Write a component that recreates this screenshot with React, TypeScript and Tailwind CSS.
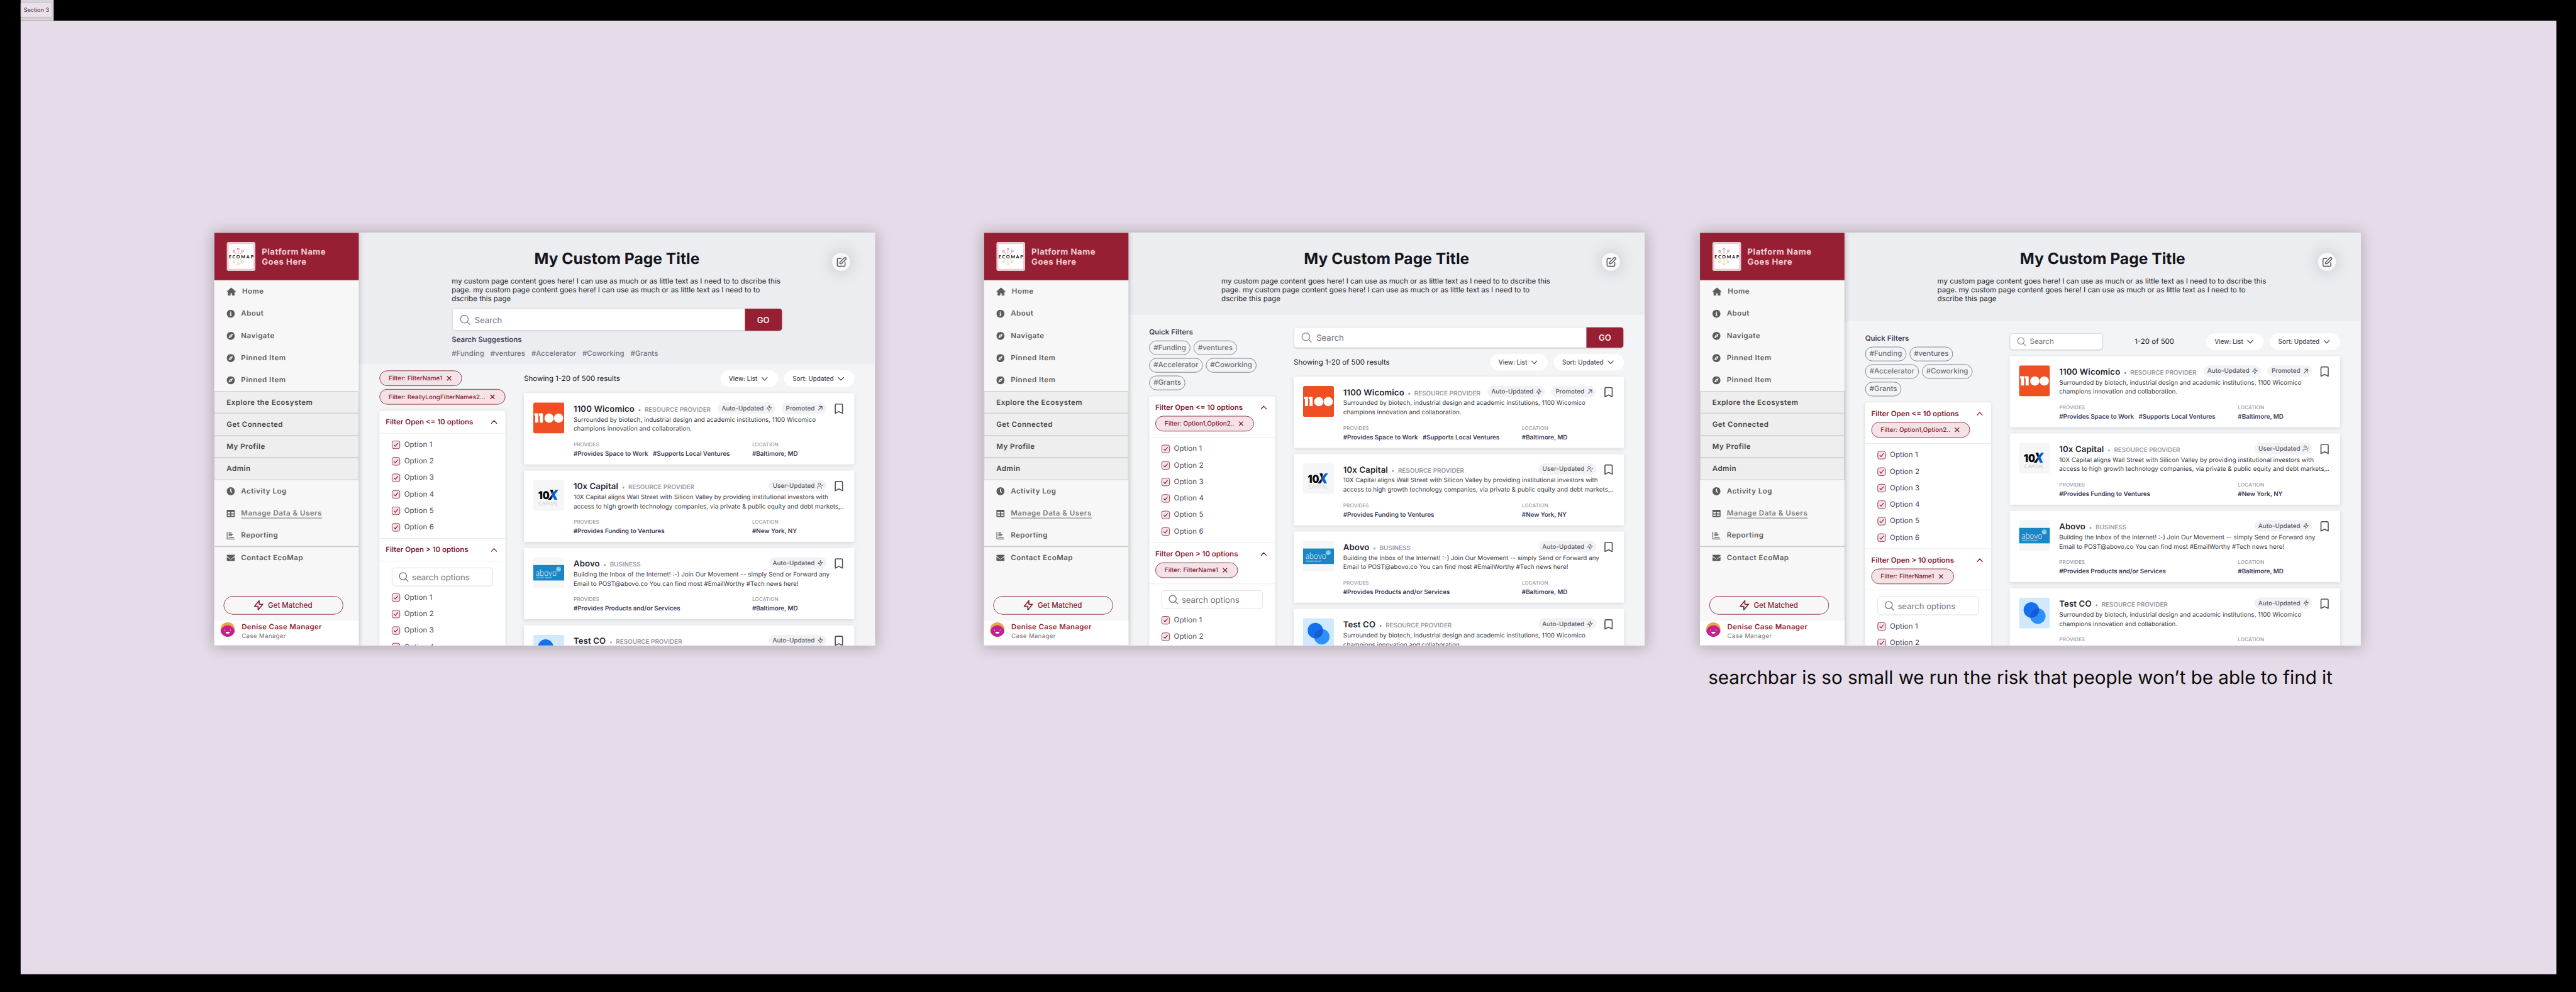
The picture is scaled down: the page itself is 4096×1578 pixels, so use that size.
import type { ReactNode } from "react";
import { FaClock, FaCompass, FaEnvelope, FaInfoCircle, FaTable } from "react-icons/fa";
import { UserCheck } from "lucide-react";

type IconProps = { className?: string };

function StrokeIcon({ d, className, width = 2 }: { d: string; className?: string; width?: number }) {
  return (
    <svg
      viewBox="0 0 24 24"
      fill="none"
      stroke="currentColor"
      strokeWidth={width}
      strokeLinecap="round"
      strokeLinejoin="round"
      className={className}
    >
      <path d={d} />
    </svg>
  );
}

const Bolt = (p: IconProps) => <StrokeIcon {...p} d="M13 10V3L4 14h7v7l9-11h-7z" />;
const Bookmark = (p: IconProps) => <StrokeIcon {...p} d="M5 5a2 2 0 012-2h10a2 2 0 012 2v16l-7-3.500L5 21V5z" />;
const Glass = (p: IconProps) => <StrokeIcon {...p} d="M21 21l-5.200-5.200M18 10.500a7.500 7.500 0 11-15 0 7.500 7.500 0 0115 0z" width={1.800} />;
const ChevronDown = (p: IconProps) => <StrokeIcon {...p} d="M18 9l-6 6.500L6 9" width={1.900} />;
const ChevronUp = (p: IconProps) => <StrokeIcon {...p} d="M6 15l6-6.500 6 6.500" width={1.900} />;
const Close = (p: IconProps) => <StrokeIcon {...p} d="M6.500 17.500l11-11M6.500 6.500l11 11" width={2.400} />;
const ArrowOut = (p: IconProps) => <StrokeIcon {...p} d="M6 18L18 6M8 6h10v10" width={2.300} />;
const Pencil = (p: IconProps) => (
  <StrokeIcon
    {...p}
    width={1.700}
    d="M11 5H6a2 2 0 00-2 2v11a2 2 0 002 2h11a2 2 0 002-2v-5m-1.414-9.414a2 2 0 112.828 2.828L11.828 15H9v-2.828l8.586-8.586z"
  />
);

const HomeIcon = () => (
  <svg viewBox="0 0 18 16" className="h-4 w-[18px]" fill="currentColor" stroke="currentColor" strokeWidth="1" strokeLinejoin="round">
    <path d="M9 .7L17.400 8h-2.300v7.500h-4.200v-4.600H7.100v4.600H2.900V8H.6z" />
  </svg>
);

const ReportIcon = () => (
  <svg viewBox="0 0 16 16" className="size-4" fill="none" stroke="currentColor" strokeWidth="1.600" strokeLinecap="round">
    <path d="M.9 1.500v12.200q0 .9.9.9h13.300M4.500 2.800h4.500M4.500 5.500h7M4.500 8.300h5.500M4.500 11.200h9" />
  </svg>
);

function EcoMapLogo() {
  return (
    <svg viewBox="0 0 56 56" className="size-14 shrink-0">
      <rect width="56" height="56" rx="4" fill="#EBCBD1" />
      <rect x="4" y="4" width="48" height="48" rx="1.500" fill="#fff" />
      <g fill="none" stroke="#B4384F" strokeWidth=".8">
        <circle cx="14" cy="18" r="1.900" />
        <circle cx="22.500" cy="14" r="1.900" />
        <circle cx="31" cy="17.500" r="1.900" />
        <path d="M15.800 20l3.700 4M22.500 17.500v5M29.500 20l-3.500 4" />
      </g>
      <g fill="none" stroke="#E3B04B" strokeWidth=".8">
        <circle cx="14" cy="38" r="1.900" />
        <circle cx="22.700" cy="42" r="1.900" />
        <circle cx="30.500" cy="38" r="1.900" />
        <path d="M15.800 36l4-4.500M22.600 38.500V33M29 36l-3.600-4.500" />
      </g>
      <text x="4.300" y="31.300" textLength="47.500" fontFamily="Lato, sans-serif" fontWeight="900" fontSize="8.600" fill="#111">
        ECOMAP
      </text>
    </svg>
  );
}

function Logo1100() {
  return (
    <svg viewBox="0 0 60 60" className="size-[60px] shrink-0">
      <rect width="60" height="60" rx="4" fill="#F04E23" />
      <g fill="#fff">
        <path d="M2 21h7.800v18H3.800V25.500H2zM11 21h7.800v18h-6V25.500H11z" />
        <circle cx="30.700" cy="30.300" r="9" />
        <circle cx="49" cy="30.300" r="9" />
      </g>
    </svg>
  );
}

function Logo10X() {
  return (
    <svg viewBox="0 0 60 60" className="size-[60px] shrink-0">
      <defs>
        <linearGradient id="tenx" x1="0" y1="0" x2="1" y2="0.300">
          <stop offset="0.500" stopColor="#050505" />
          <stop offset="0.500" stopColor="#0B5BD3" />
        </linearGradient>
      </defs>
      <rect width="60" height="60" rx="4" fill="#F5F6F8" />
      <text x="9.500" y="37.500" textLength="22" lengthAdjust="spacingAndGlyphs" fontFamily="Inter, sans-serif" fontWeight="900" fontSize="21" fill="#050505">
        10
      </text>
      <text x="29" y="39" textLength="19" lengthAdjust="spacingAndGlyphs" fontFamily="Inter, sans-serif" fontWeight="900" fontStyle="italic" fontSize="27" fill="url(#tenx)">
        X
      </text>
      <text x="10.500" y="49" textLength="38" lengthAdjust="spacingAndGlyphs" fontFamily="Lato, sans-serif" fontWeight="300" fontSize="10.500" fill="#9A9CA3">
        CAPITAL
      </text>
    </svg>
  );
}

function LogoAbovo() {
  return (
    <svg viewBox="0 0 60 60" className="size-[60px] shrink-0">
      <rect width="60" height="60" rx="4" fill="#F5F6F8" />
      <rect y="15" width="60" height="30" fill="#1B86C4" />
      <circle cx="49" cy="23" r="4.800" fill="#7CC4EC" />
      <text x="46" y="24.800" fontFamily="Lato, sans-serif" fontSize="4.500" fill="#E5F4FC">
        co
      </text>
      <text x="5" y="35.500" textLength="40" lengthAdjust="spacingAndGlyphs" fontFamily="Lato, sans-serif" fontWeight="300" fontSize="17" fill="#fff">
        abovo
      </text>
      <text x="5.500" y="41.200" textLength="30" fontFamily="Lato, sans-serif" fontSize="5.300" fill="#CBE6F5">
        social email
      </text>
    </svg>
  );
}

function LogoTest() {
  return (
    <svg viewBox="0 0 60 60" className="size-[60px] shrink-0">
      <defs>
        <clipPath id="testA">
          <circle cx="24" cy="24" r="15" />
        </clipPath>
      </defs>
      <rect width="60" height="60" rx="4" fill="#D1E9FF" />
      <circle cx="24" cy="24" r="15" fill="#1570EF" />
      <circle cx="36.500" cy="36" r="15" fill="#2E90FA" />
      <circle cx="36.500" cy="36" r="15" fill="#175CD3" clipPath="url(#testA)" />
    </svg>
  );
}

function Avatar() {
  return (
    <svg viewBox="0 0 28 28" className="size-7 shrink-0">
      <defs>
        <clipPath id="face">
          <circle cx="14" cy="14" r="14" />
        </clipPath>
      </defs>
      <g clipPath="url(#face)">
        <rect width="28" height="28" fill="#EDA54C" />
        <circle cx="14" cy="20" r="14" fill="#C4208F" />
      </g>
      <path d="M10 18.300h8a4 3.700 0 01-8 0z" fill="#fff" />
      <circle cx="8.600" cy="15" r=".8" fill="#fff" />
      <circle cx="19.400" cy="15" r=".8" fill="#fff" />
    </svg>
  );
}

function NavItem({ icon, label, muted }: { icon: ReactNode; label: string; muted?: boolean }) {
  return (
    <div className="flex h-[43px] items-center gap-3 px-6 text-sm font-semibold tracking-[0.6px] text-[#5C5C5C]">
      {icon}
      <span className={muted ? "relative top-px border-b-2 border-[#A9A9A9] leading-[17px] text-[#7B7B7B]" : ""}>
        {label}
      </span>
    </div>
  );
}

function NavSection({ label }: { label: string }) {
  return (
    <div className="flex h-[43px] items-center border border-[#C9C9C9] bg-[#EEEEEE] px-[23px] text-sm font-semibold tracking-[0.6px] text-[#464646]">
      {label}
    </div>
  );
}

function Sidebar() {
  return (
    <aside className="relative z-10 flex h-full w-[280px] shrink-0 flex-col bg-[#F7F7F7] shadow-[1px_0_10px_rgba(0,0,0,0.28)]">
      <div className="flex h-[92px] items-center gap-3 bg-[#961F33] px-6">
        <EcoMapLogo />
        <div className="text-base font-bold leading-5 tracking-[0.65px] text-[#F0CDD3]">
          Platform Name
          <br />
          Goes Here
        </div>
      </div>
      <NavItem icon={<HomeIcon />} label="Home" />
      <NavItem icon={<FaInfoCircle size={16} />} label="About" />
      <NavItem icon={<FaCompass size={16} />} label="Navigate" />
      <NavItem icon={<FaCompass size={16} />} label="Pinned Item" />
      <NavItem icon={<FaCompass size={16} />} label="Pinned Item" />
      <NavSection label="Explore the Ecosystem" />
      <NavSection label="Get Connected" />
      <NavSection label="My Profile" />
      <NavSection label="Admin" />
      <NavItem icon={<FaClock size={16} />} label="Activity Log" />
      <NavItem icon={<FaTable size={16} />} label="Manage Data & Users" muted />
      <NavItem icon={<ReportIcon />} label="Reporting" />
      <div className="-mt-px h-0.5 bg-[#C9C9C9]" />
      <div className="-mt-px">
        <NavItem icon={<FaEnvelope size={16} />} label="Contact EcoMap" />
      </div>
      <button className="ml-[18px] mt-[53px] flex h-9 w-[232px] items-center justify-center gap-1.5 rounded-full border border-[#851C32] pr-1 text-sm font-medium text-[#851C32]">
        <Bolt className="size-6" />
        Get Matched
      </button>
      <div className="mt-3 flex h-[46px] gap-[13px] bg-white pl-3 pt-[3px]">
        <Avatar />
        <div className="whitespace-nowrap">
          <div className="text-sm font-semibold leading-[18px] tracking-[0.4px] text-[#961F33]">Denise Case Manager</div>
          <div className="text-xs leading-[18px] tracking-[0.3px] text-[#777777]">Case Manager</div>
        </div>
      </div>
    </aside>
  );
}

function PageHeader({ className, children }: { className: string; children?: ReactNode }) {
  return (
    <header className={"relative flex flex-col items-center bg-[#ECEDF1] " + className}>
      <h1 className="pt-[33px] text-[30px] font-bold leading-9 text-[#15151C]">My Custom Page Title</h1>
      <p className="mt-4 w-[640px] whitespace-nowrap text-sm leading-[17px] text-[#1B1B22]">
        my custom page content goes here! I can use as much or as little text as I need to to dscribe this
        <br />
        page. my custom page content goes here! I can use as much or as little text as I need to to
        <br />
        dscribe this page
      </p>
      {children}
      <button className="absolute right-12 top-[39px] flex size-[35px] items-center justify-center rounded-full bg-[#F8F8FA] text-[#4A4A55] shadow-[0_0_30px_rgba(70,70,90,0.28)]">
        <Pencil className="size-6" />
      </button>
    </header>
  );
}

function SearchBar({ className }: { className: string }) {
  return (
    <div className={"flex w-[639px] overflow-hidden rounded-md shadow-[0_1px_2px_rgba(0,0,0,0.12)] " + className}>
      <div className="flex flex-1 items-center gap-[7px] rounded-l-md border border-r-0 border-[#D6D6DB] bg-white pl-3 text-base text-[#70707B]">
        <Glass className="size-6 text-[#9090A0]" />
        Search
      </div>
      <button className="w-[72px] bg-[#961F33] text-base font-semibold text-[#FBEDEF]">GO</button>
    </div>
  );
}

const TAGS = ["#Funding", "#ventures", "#Accelerator", "#Coworking", "#Grants"];

function Chip({ label }: { label: string }) {
  return (
    <div className="flex h-[30px] w-fit items-center gap-[5px] rounded-full border border-[#851C32] bg-[#F4E3E6] pl-[17px] pr-4 text-xs font-medium tracking-[0.03px] text-[#851C32]">
      {label}
      <Close className="size-4" />
    </div>
  );
}

function QuickFilters() {
  return (
    <div className="mb-3 pt-6">
      <div className="text-sm font-semibold leading-5 text-[#44445A]">Quick Filters</div>
      <div className="mt-1.5 flex flex-wrap gap-1.5">
        {TAGS.map((t) => (
          <span key={t} className="flex h-7 items-center rounded-full border border-[#70707F] px-[7.5px] text-sm font-medium text-[#70707B]">
            {t}
          </span>
        ))}
      </div>
    </div>
  );
}

function FilterHead({ title, chip }: { title: string; chip?: string }) {
  return (
    <div className="border-b border-[#E7E7EA] px-3 pb-[11px] pt-3">
      <div className="flex h-5 items-center justify-between text-sm font-semibold text-[#851C32]">
        {title}
        <ChevronUp className="size-5" />
      </div>
      {chip && (
        <div className="mt-1.5">
          <Chip label={chip} />
        </div>
      )}
    </div>
  );
}

function Options({ count, searchable }: { count: number; searchable?: boolean }) {
  return (
    <div className="flex flex-col gap-3 border-b border-[#E7E7EA] px-6 pb-[11px] pt-3">
      {searchable && (
        <div className="flex h-9 items-center gap-[5px] rounded-md border border-[#D9D9DE] pl-[11px] text-base text-[#73737D]">
          <Glass className="size-[22px]" />
          search options
        </div>
      )}
      {Array.from({ length: count }, (_, i) => (
        <label key={i} className="flex h-5 items-center gap-2 text-sm tracking-[0.12px] text-[#44445A]">
          <span className="flex size-4 items-center justify-center rounded border border-[#851C32] bg-[#F8E1E5] text-[#6B1428]">
            <StrokeIcon d="M5 13l4.500 5L19 6" className="size-3" width={2.600} />
          </span>
          Option {i + 1}
        </label>
      ))}
    </div>
  );
}

function FilterPanel({ chips, tail }: { chips?: boolean; tail: number }) {
  return (
    <div className="w-[244px] rounded bg-white shadow-[0_1px_6px_rgba(0,0,0,0.1)]">
      <FilterHead title="Filter Open <= 10 options" chip={chips ? "Filter: Option1,Option2.." : undefined} />
      <Options count={6} />
      <FilterHead title="Filter Open > 10 options" chip={chips ? "Filter: FilterName1" : undefined} />
      <Options count={tail} searchable />
    </div>
  );
}

function Dropdown({ label }: { label: string }) {
  return (
    <button className="flex h-8 items-center gap-1 rounded-full bg-white px-4 text-xs font-medium text-[#4A4A5A]">
      {label}
      <ChevronDown className="size-5" />
    </button>
  );
}

function Dropdowns() {
  return (
    <div className="flex gap-3">
      <Dropdown label="View: List" />
      <Dropdown label="Sort: Updated" />
    </div>
  );
}

type Badge = "auto" | "user" | "promoted";

type Listing = {
  logo: ReactNode;
  name: string;
  kind: string;
  badges: Badge[];
  lines: [string, string];
  provides: string[];
  location: string;
};

const LISTINGS: Listing[] = [
  {
    logo: <Logo1100 />,
    name: "1100 Wicomico",
    kind: "RESOURCE PROVIDER",
    badges: ["auto", "promoted"],
    lines: [
      "Surrounded by biotech, industrial design and academic institutions, 1100 Wicomico",
      "champions innovation and collaboration.",
    ],
    provides: ["#Provides Space to Work", "#Supports Local Ventures"],
    location: "#Baltimore, MD",
  },
  {
    logo: <Logo10X />,
    name: "10x Capital",
    kind: "RESOURCE PROVIDER",
    badges: ["user"],
    lines: [
      "10X Capital aligns Wall Street with Silicon Valley by providing institutional investors with",
      "access to high growth technology companies, via private & public equity and debt markets,..",
    ],
    provides: ["#Provides Funding to Ventures"],
    location: "#New York, NY",
  },
  {
    logo: <LogoAbovo />,
    name: "Abovo",
    kind: "BUSINESS",
    badges: ["auto"],
    lines: [
      "Building the Inbox of the Internet! :-) Join Our Movement -- simply Send or Forward any",
      "Email to POST@abovo.co You can find most #EmailWorthy #Tech news here!",
    ],
    provides: ["#Provides Products and/or Services"],
    location: "#Baltimore, MD",
  },
  {
    logo: <LogoTest />,
    name: "Test CO",
    kind: "RESOURCE PROVIDER",
    badges: ["auto"],
    lines: [
      "Surrounded by biotech, industrial design and academic institutions, 1100 Wicomico",
      "champions innovation and collaboration.",
    ],
    provides: [],
    location: "",
  },
];

const BADGES: Record<Badge, { label: string; icon: ReactNode }> = {
  auto: { label: "Auto-Updated", icon: <Bolt className="size-3.5" /> },
  user: { label: "User-Updated", icon: <UserCheck className="size-3.5" /> },
  promoted: { label: "Promoted", icon: <ArrowOut className="size-3.5" /> },
};

function Card({ item }: { item: Listing }) {
  return (
    <article className="flex h-[138px] w-[640px] gap-[18px] bg-white p-[18px] pb-3 shadow-[0_2px_8px_rgba(0,0,0,0.12)]">
      {item.logo}
      <div className="min-w-0 flex-1 whitespace-nowrap">
        <div className="flex h-6 items-start justify-between">
          <div className="flex items-baseline gap-2">
            <h2 className="text-base font-semibold leading-6 tracking-[0.17px] text-[#26262E]">{item.name}</h2>
            <span className="mt-[13px] size-[3.5px] self-start rounded-full bg-[#9A9AA6]" />
            <span className="text-xs font-semibold text-[#9A9AA6]">{item.kind}</span>
          </div>
          <div className="flex items-start gap-3">
            {item.badges.map((b) => (
              <span key={b} className="flex h-[22px] items-center gap-1 rounded-full bg-[#F1F2F5] pl-2 pr-[5px] text-xs font-medium text-[#5B5B66]">
                {BADGES[b].label}
                {BADGES[b].icon}
              </span>
            ))}
            <Bookmark className="size-6 text-[#4F4F60]" />
          </div>
        </div>
        <p className="text-xs leading-[18px] text-[#3A3A44]">
          {item.lines[0]}
          <br />
          {item.lines[1]}
        </p>
        <div className="mt-3.5 flex text-xs leading-[18px] text-[#40405A]">
          <div className="w-[346px]">
            <div className="text-[10px] font-medium leading-4 text-[#9A9AA6]">PROVIDES</div>
            <div className="flex gap-[9px] font-semibold tracking-[-0.06px]">
              {item.provides.map((p) => (
                <span key={p}>{p}</span>
              ))}
            </div>
          </div>
          <div>
            <div className="text-[10px] font-medium leading-4 text-[#9A9AA6]">LOCATION</div>
            <div className="font-semibold tracking-[-0.06px]">{item.location}</div>
          </div>
        </div>
      </div>
    </article>
  );
}

function Cards() {
  return (
    <div className="mt-3 flex flex-col gap-3">
      {LISTINGS.map((item) => (
        <Card key={item.name} item={item} />
      ))}
    </div>
  );
}

function Frame({ header, left, right }: { header: ReactNode; left: ReactNode; right: ReactNode }) {
  return (
    <div className="h-[800px] w-[1280px] shadow-[0_2px_26px_3px_rgba(0,0,0,0.22)]">
      <div className="flex h-full overflow-hidden bg-[#F3F4F6]">
        <Sidebar />
        <div className="flex-1">
          {header}
          <div className="flex gap-9 pl-10">
            <div className="w-[244px]">{left}</div>
            <div className="w-[640px]">{right}</div>
          </div>
        </div>
      </div>
    </div>
  );
}

function SearchOnTop() {
  return (
    <Frame
      header={
        <PageHeader className="h-[255px]">
          <SearchBar className="mt-[11px] h-[43px]" />
          <div className="mt-2 w-[640px] text-sm">
            <div className="font-semibold leading-5 text-[#44445A]">Search Suggestions</div>
            <div className="mt-1.5 flex gap-3 font-medium leading-5 text-[#777783]">
              {TAGS.map((t) => (
                <span key={t}>{t}</span>
              ))}
            </div>
          </div>
        </PageHeader>
      }
      left={
        <>
          <div className="mb-3 flex flex-col gap-1.5 pt-3">
            <Chip label="Filter: FilterName1" />
            <Chip label="Filter: ReallyLongFilterNames2..." />
          </div>
          <FilterPanel tail={4} />
        </>
      }
      right={
        <>
          <div className="flex items-center justify-between pt-3 text-sm text-[#15151C]">
            Showing 1-20 of 500 results
            <Dropdowns />
          </div>
          <Cards />
        </>
      }
    />
  );
}

function SearchAboveResults() {
  return (
    <Frame
      header={<PageHeader className="h-[159px]" />}
      left={
        <>
          <QuickFilters />
          <FilterPanel chips tail={2} />
        </>
      }
      right={
        <>
          <div className="pt-6">
            <SearchBar className="h-10" />
          </div>
          <div className="flex items-center justify-between pt-3 text-sm text-[#15151C]">
            Showing 1-20 of 500 results
            <Dropdowns />
          </div>
          <Cards />
        </>
      }
    />
  );
}

function SearchInline() {
  return (
    <Frame
      header={<PageHeader className="h-[171px]" />}
      left={
        <>
          <QuickFilters />
          <FilterPanel chips tail={2} />
        </>
      }
      right={
        <>
          <div className="flex items-center justify-between pt-6 text-sm text-[#15151C]">
            <div className="flex h-8 w-[180px] items-center gap-1.5 rounded-md border border-[#D6D6DB] bg-white pl-3 text-[#70707B] shadow-[0_1px_2px_rgba(0,0,0,0.08)]">
              <Glass className="size-5 text-[#9090A0]" />
              Search
            </div>
            1-20 of 500
            <Dropdowns />
          </div>
          <Cards />
        </>
      }
    />
  );
}

export default function App() {
  return (
    <div className="h-[1578px] w-[4096px] overflow-hidden bg-black font-[Inter,sans-serif] [text-rendering:geometricPrecision]">
      <div className="flex h-[1922px] w-[4990px] origin-top-left scale-[0.82084] flex-col pl-10">
        <div className="h-10 w-16 shrink-0 bg-[#D6D4D5] pt-1">
          <div className="flex h-[30px] w-[61px] items-center justify-center rounded-[2px] border border-[#B5B0B7] bg-[#EADFEB] text-[11px] text-[#2A2433]">
            Section 3
          </div>
        </div>
        <main className="flex h-[1848px] w-[4912px] shrink-0 bg-[#E6DBE8] pl-[375px] pt-[411px]">
          <SearchOnTop />
          <div className="ml-[211px]">
            <SearchAboveResults />
          </div>
          <div className="ml-[107px]">
            <SearchInline />
            <p className="ml-4 mt-10 whitespace-nowrap text-[36px] leading-[44px] text-[#0A0A0A]">
              searchbar is so small we run the risk that people won’t be able to find it
            </p>
          </div>
        </main>
      </div>
    </div>
  );
}
